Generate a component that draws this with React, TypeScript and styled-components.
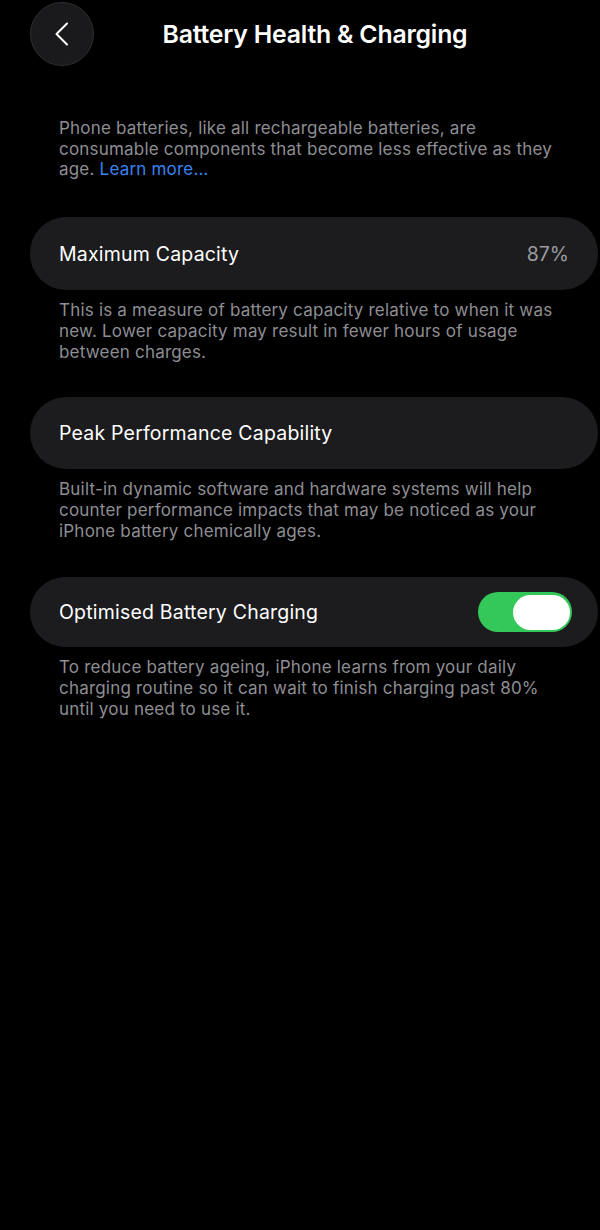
import React from "react";
import styled, { createGlobalStyle } from "styled-components";

const GlobalStyle = createGlobalStyle`
  html, body {
    margin: 0;
    padding: 0;
    background: #000;
  }
  body {
    font-family: Inter, "Noto Sans", "Liberation Sans", sans-serif;
    -webkit-font-smoothing: antialiased;
  }
`;

const Screen = styled.div`
  width: 600px;
  min-height: 1230px;
  background: #000;
  color: #fff;
  display: flex;
  flex-direction: column;
`;

const Header = styled.header`
  display: grid;
  grid-template-columns: 64px 1fr 64px;
  align-items: center;
  padding: 1px 0 0 30px;
  height: 65px;
`;

const BackButton = styled.button`
  width: 64px;
  height: 64px;
  border-radius: 50%;
  background: #1a1a1c;
  border: 1px solid #2e2e30;
  display: flex;
  align-items: center;
  justify-content: center;
  padding: 0;
  cursor: pointer;
`;

const Title = styled.h1`
  margin: 0;
  text-align: center;
  font-size: 24.8px;
  font-weight: 600;
  letter-spacing: -0.2px;
  color: #fff;
`;

const Content = styled.main`
  display: flex;
  flex-direction: column;
  padding: 0 2px 0 30px;
`;

const Note = styled.p<{ $top: number }>`
  margin: ${(p) => p.$top}px 0 0;
  padding: 0 29px;
  font-size: 17px;
  line-height: 20.7px;
  color: #8e8e93;
  letter-spacing: 0.2px;
`;

const Link = styled.a`
  color: #3b82f0;
  text-decoration: none;
`;

const Card = styled.div<{ $top: number; $height: number }>`
  margin-top: ${(p) => p.$top}px;
  height: ${(p) => p.$height}px;
  border-radius: 36px;
  background: #1c1c1e;
  display: flex;
  align-items: center;
  justify-content: space-between;
  padding: 0 26px 0 29px;
`;

const Label = styled.span`
  font-size: 19.5px;
  color: #fff;
  letter-spacing: 0.2px;
`;

const Value = styled.span`
  font-size: 19.5px;
  color: #9a9a9f;
  padding-right: 3px;
`;

const Toggle = styled.div<{ $on: boolean }>`
  width: 94px;
  height: 40px;
  border-radius: 20px;
  background: ${(p) => (p.$on ? "#34c759" : "#39393d")};
  display: flex;
  align-items: center;
  justify-content: ${(p) => (p.$on ? "flex-end" : "flex-start")};
  padding: 0 2px;
  box-sizing: border-box;
`;

const Knob = styled.div`
  width: 57px;
  height: 35px;
  border-radius: 18px;
  background: #fff;
`;

const Chevron = () => (
  <svg width="16" height="24" viewBox="0 0 16 24" fill="none">
    <path
      d="M13 1.5 L2.5 12 L13 22.5"
      stroke="#fff"
      strokeWidth="2"
      strokeLinecap="round"
      strokeLinejoin="round"
    />
  </svg>
);

export default function App() {
  return (
    <>
      <GlobalStyle />
      <Screen>
        <Header>
          <BackButton aria-label="Back">
            <Chevron />
          </BackButton>
          <Title>Battery Health &amp; Charging</Title>
        </Header>
        <Content>
          <Note $top={52}>
            Phone batteries, like all rechargeable batteries, are consumable
            components that become less effective as they age.{" "}
            <Link href="#">Learn more...</Link>
          </Note>

          <Card $top={37} $height={73}>
            <Label>Maximum Capacity</Label>
            <Value>87%</Value>
          </Card>
          <Note $top={10}>
            This is a measure of battery capacity relative to when it was new.
            Lower capacity may result in fewer hours of usage between charges.
          </Note>

          <Card $top={35} $height={72}>
            <Label>Peak Performance Capability</Label>
          </Card>
          <Note $top={10}>
            Built-in dynamic software and hardware systems will help counter
            performance impacts that may be noticed as your iPhone battery
            chemically ages.
          </Note>

          <Card $top={36} $height={70}>
            <Label>Optimised Battery Charging</Label>
            <Toggle $on={true}>
              <Knob />
            </Toggle>
          </Card>
          <Note $top={10}>
            To reduce battery ageing, iPhone learns from your daily charging
            routine so it can wait to finish charging past 80% until you need
            to use it.
          </Note>
        </Content>
      </Screen>
    </>
  );
}
